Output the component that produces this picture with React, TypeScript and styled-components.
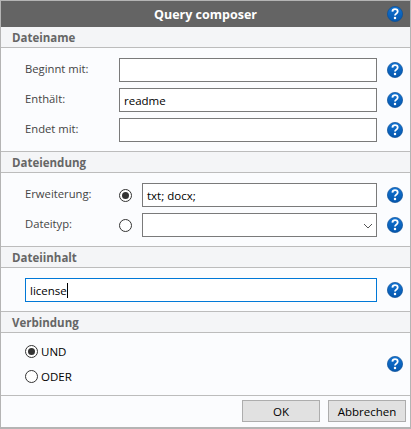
import React from "react";
import styled, { createGlobalStyle } from "styled-components";

const Global = createGlobalStyle`
  html, body { margin: 0; padding: 0; background: #fbfcfe; }
  body { font-family: "Open Sans", "Noto Sans", sans-serif; font-size: 11.5px; }
`;

const Dialog = styled.div`
  box-sizing: border-box;
  width: 411px;
  height: 429px;
  display: flex;
  flex-direction: column;
  background: #fbfcfe;
  border: solid #b4b4b4;
  border-width: 1px 1px 2px 1px;
`;

const TitleBar = styled.div`
  height: 26px;
  flex: none;
  display: grid;
  grid-template-columns: 1fr auto 1fr;
  align-items: center;
  padding-right: 7px;
  background: #646464;
  color: #fff;
  font-weight: 700;
  font-size: 12.5px;
`;

const TitleText = styled.div`
  grid-column: 2;
  margin-left: 7px;
`;

const TitleHelp = styled.div`
  grid-column: 3;
  justify-self: end;
  display: flex;
`;

const SectionHead = styled.div`
  box-sizing: border-box;
  height: 21px;
  flex: none;
  padding-left: 11px;
  display: flex;
  align-items: center;
  background: #f4f5f7;
  border-bottom: 1px solid #bcbcbc;
  color: #666;
  font-weight: 700;
  font-size: 11.5px;
`;

const SectionBody = styled.div`
  display: flex;
  flex-direction: column;
  gap: 6px;
  padding: 10px 7px 9px 24px;
  border-bottom: 1px solid #bcbcbc;
`;

const Row = styled.div`
  display: flex;
  align-items: center;
  height: 24px;
`;

const Label = styled.div`
  width: 94px;
  flex: none;
  color: #444;
  font-size: 11.25px;
  margin-top: -3px;
`;

const Field = styled.div<{ $focused?: boolean }>`
  box-sizing: border-box;
  flex: 1;
  min-width: 0;
  height: 24px;
  display: flex;
  align-items: center;
  justify-content: space-between;
  padding: 0 3px 0 4px;
  background: #fff;
  border: 1px solid ${(p) => (p.$focused ? "#0078d7" : "#7a7a7a")};
  color: #000;
`;

const Typed = styled.span`
  display: inline-flex;
  align-items: center;
`;

const Caret = styled.span`
  display: inline-block;
  width: 1px;
  height: 15px;
  background: #000;
`;

const RadioMark = styled.span<{ $on?: boolean }>`
  box-sizing: border-box;
  flex: none;
  width: 13px;
  height: 13px;
  border-radius: 50%;
  border: 1px solid #333;
  background: #fff;
  display: flex;
  align-items: center;
  justify-content: center;
  &::after {
    content: "";
    width: 7px;
    height: 7px;
    border-radius: 50%;
    background: ${(p) => (p.$on ? "#333" : "transparent")};
  }
`;

const RadioSlot = styled.div`
  width: 23px;
  flex: none;
  display: flex;
`;

const HelpSlot = styled.div`
  margin-left: 10px;
  flex: none;
  display: flex;
`;

const JoinBody = styled.div`
  display: flex;
  align-items: center;
  justify-content: space-between;
  height: 62px;
  flex: none;
  padding: 0 7px 0 24px;
  border-bottom: 1px solid #bcbcbc;
`;

const RadioList = styled.div`
  display: flex;
  flex-direction: column;
  gap: 5px;
`;

const RadioRow = styled.div`
  display: flex;
  align-items: center;
  gap: 3px;
  height: 20px;
  color: #000;
`;

const Footer = styled.div`
  flex: 1;
  display: flex;
  justify-content: flex-end;
  align-items: flex-start;
  gap: 8px;
  padding: 4px 4px 0 0;
`;

const Button = styled.button`
  box-sizing: border-box;
  width: 78px;
  height: 22px;
  padding: 0;
  background: #e1e1e1;
  border: 1px solid #adadad;
  color: #000;
  font: inherit;
`;

const ChevronIcon = styled.svg`
  margin-top: 2px;
`;

const Help = () => (
  <svg width="16" height="16" viewBox="0 0 16 16" aria-label="Hilfe">
    <defs>
      <linearGradient id="helpFill" x1="0" y1="0" x2="0" y2="1">
        <stop offset="0" stopColor="#1273d2" />
        <stop offset="1" stopColor="#0557ad" />
      </linearGradient>
    </defs>
    <circle cx="8" cy="8" r="7.6" fill="url(#helpFill)" stroke="#0b4f98" strokeWidth="0.7" />
    <path d="M5.4 5.6C5.5 3.9 6.7 3.2 8 3.2c1.5 0 2.7.9 2.7 2.3 0 1.1-.7 1.7-1.5 2.2-.8.5-1.2 1-1.2 1.9" fill="none" stroke="#fff" strokeWidth="1.8" />
    <circle cx="8" cy="12.1" r="1.25" fill="#fff" />
  </svg>
);

const Chevron = () => (
  <ChevronIcon width="10" height="6" viewBox="0 0 10 6">
    <path d="M1 1l4 4 4-4" fill="none" stroke="#555" strokeWidth="1" />
  </ChevronIcon>
);

const TextRow = ({ label, value }: { label: string; value?: string }) => (
  <Row>
    <Label>{label}</Label>
    <Field>{value}</Field>
    <HelpSlot><Help /></HelpSlot>
  </Row>
);

export default function App() {
  return (
    <>
      <Global />
      <Dialog>
        <TitleBar>
          <TitleText>Query composer</TitleText>
          <TitleHelp><Help /></TitleHelp>
        </TitleBar>

        <SectionHead>Dateiname</SectionHead>
        <SectionBody>
          <TextRow label="Beginnt mit:" />
          <TextRow label="Enthält:" value="readme" />
          <TextRow label="Endet mit:" />
        </SectionBody>

        <SectionHead>Dateiendung</SectionHead>
        <SectionBody>
          <Row>
            <Label>Erweiterung:</Label>
            <RadioSlot><RadioMark $on /></RadioSlot>
            <Field>txt; docx;</Field>
            <HelpSlot><Help /></HelpSlot>
          </Row>
          <Row>
            <Label>Dateityp:</Label>
            <RadioSlot><RadioMark /></RadioSlot>
            <Field><span /><Chevron /></Field>
            <HelpSlot><Help /></HelpSlot>
          </Row>
        </SectionBody>

        <SectionHead>Dateiinhalt</SectionHead>
        <SectionBody>
          <Row>
            <Field $focused><Typed>license<Caret /></Typed></Field>
            <HelpSlot><Help /></HelpSlot>
          </Row>
        </SectionBody>

        <SectionHead>Verbindung</SectionHead>
        <JoinBody>
          <RadioList>
            <RadioRow><RadioMark $on />UND</RadioRow>
            <RadioRow><RadioMark />ODER</RadioRow>
          </RadioList>
          <HelpSlot><Help /></HelpSlot>
        </JoinBody>

        <Footer>
          <Button>OK</Button>
          <Button>Abbrechen</Button>
        </Footer>
      </Dialog>
    </>
  );
}
